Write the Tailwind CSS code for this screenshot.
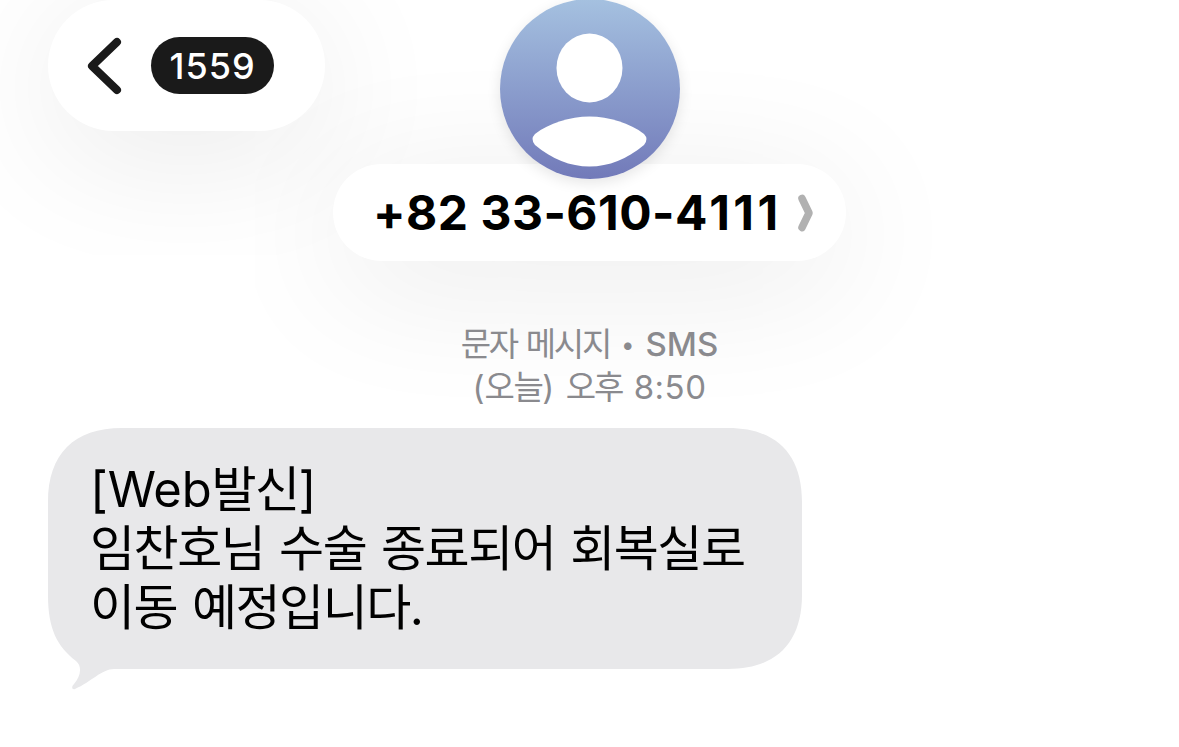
<!DOCTYPE html>
<html lang="ko">
<head>
  <meta charset="UTF-8" />
  <meta name="viewport" content="width=device-width, initial-scale=1.0" />
  <title>메시지</title>
  <script src="https://cdn.jsdelivr.net/npm/@tailwindcss/browser@4"></script>
</head>
<body class="bg-white overflow-hidden font-['Inter','Noto_Sans_CJK_KR',sans-serif]">

  <!-- Header -->
  <header class="grid grid-cols-[1fr_auto_1fr] h-[261px] px-12">
    <button class="flex items-center w-[277px] h-[131px] pl-[39px] rounded-full bg-white shadow-[0_22px_140px_rgba(0,0,0,0.09)]">
      <svg class="w-[36px] h-[60px]" viewBox="0 0 36 60" fill="none" stroke="#1a1a1a" stroke-width="8" stroke-linecap="round" stroke-linejoin="round">
        <path d="M30 6L5 30L30 54" />
      </svg>
      <span class="flex items-center justify-center ml-7 w-[123px] h-[57px] rounded-full bg-[#1a1a1a] text-white text-[36px] font-medium leading-none tracking-[1px]">1559</span>
    </button>

    <div class="flex flex-col items-center w-[513px] -mt-px">
      <div class="relative z-10 w-[180px] h-[180px] shrink-0 rounded-full bg-linear-to-b from-[#a5c1e0] to-[#727ab9] shadow-[0_4px_14px_rgba(0,0,0,0.1)]">
        <svg class="w-full h-full" viewBox="0 0 180 180" fill="#fff">
          <ellipse cx="89.500" cy="69" rx="33" ry="34.500" />
          <path d="M35 135C49 124 70 117.500 89.500 117.500C109 117.500 130 124 144 135Q149 140 144 146C127 160 109 167.500 89.500 167.500C70 167.500 52 160 35 146Q30 140 35 135Z" />
        </svg>
      </div>
      <div class="flex items-center w-full h-[97px] -mt-[15px] pl-[40px] rounded-full bg-white shadow-[0_22px_140px_rgba(0,0,0,0.09)]">
        <span class="w-[407px] whitespace-nowrap text-[48px] font-bold leading-none tracking-[0.500px] text-black">+82 33-610-<span class="tracking-[3.500px]">4111</span></span>
        <svg class="ml-4 w-[20px] h-[40px]" viewBox="0 0 20 40" fill="none" stroke="#b1b1b1" stroke-width="7.500" stroke-linecap="round" stroke-linejoin="round">
          <path d="M6 5.500L13 20L6 34.500" />
        </svg>
      </div>
    </div>
  </header>

  <main class="relative">
    <!-- Conversation info -->
    <div class="pt-[62px] text-center text-[33px] leading-[43px] text-[#8a8a8e]">
      <p class="h-[43px]"><span class="tracking-[-2.300px] [word-spacing:2px]">문자 메시지</span> <span class="inline-block w-[17px] pb-1 text-[24px] leading-none align-[3px]">•</span> <span class="font-medium">SMS</span></p>
      <p class="h-[43px] [word-spacing:2px]">(<span class="tracking-[-1.500px]">오늘</span>) <span class="tracking-[-2px]">오후</span> <span class="tracking-[0.500px]">8:50</span></p>
    </div>

    <!-- Incoming message -->
    <div class="relative ml-12 mt-[19px] w-[754px] h-[262px] pt-8 pl-[42px]">
      <svg class="absolute inset-0 w-full h-full" viewBox="0 0 754 262" fill="#e8e8ea">
        <path d="M74 0H680C728 0 754 26 754 74V167C754 215 728 241 680 241H66C54 241 43 254 27 261C24 262 23 259 26 256C32 249 35 239 28 233C9 218 0 201 0 167V74C0 26 26 0 74 0Z" />
      </svg>
      <div class="relative whitespace-nowrap text-[49px] leading-[59px] tracking-[-1.500px] [word-spacing:2.500px] text-black">
        <p><span class="tracking-[-0.200px]">[Web</span>발신]</p>
        <p>임찬호님 수술 종료되어 회복실로</p>
        <p>이동 예정입니다.</p>
      </div>
    </div>
  </main>

</body>
</html>
